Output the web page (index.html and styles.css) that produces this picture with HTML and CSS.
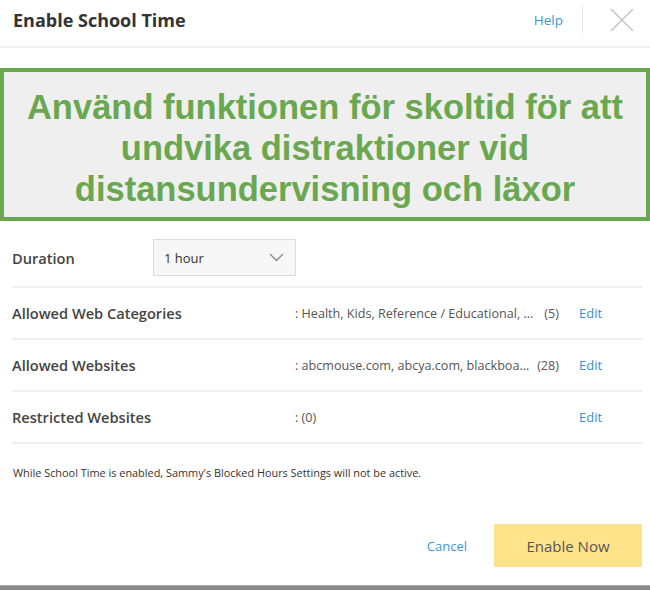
FILE: index.html
```html
<!DOCTYPE html>
<html lang="en">
<head>
    <meta charset="UTF-8">
    <meta name="viewport" content="width=device-width, initial-scale=1.0">
    <title>Enable School Time</title>
    <link rel="stylesheet" href="styles.css">
</head>
<body>
    <div class="dialog">
        <div class="header">
            <h2 class="title">Enable School Time</h2>
            <a class="help" href="#">Help</a>
            <span class="divider"></span>
            <svg class="close" width="24" height="24" viewBox="0 0 24 24">
                <path d="M1 1 L23 23 M23 1 L1 23" stroke="#c8c8c8" stroke-width="1.6" fill="none"/>
            </svg>
        </div>

        <div class="banner">
            Använd funktionen för skoltid för att<br>
            undvika distraktioner vid<br>
            distansundervisning och läxor
        </div>

        <div class="content">
            <div class="row duration">
                <span class="label short">Duration</span>
                <div class="select">
                    <span>1 hour</span>
                    <svg width="15" height="9" viewBox="0 0 15 9">
                        <path d="M1 1 L7.5 7.5 L14 1" stroke="#8a8a8a" stroke-width="1.4" fill="none"/>
                    </svg>
                </div>
            </div>

            <div class="row">
                <span class="label">Allowed Web Categories</span>
                <span class="value">: Health, Kids, Reference / Educational, ...</span>
                <span class="count">(5)</span>
                <a class="edit" href="#">Edit</a>
            </div>

            <div class="row">
                <span class="label">Allowed Websites</span>
                <span class="value">: abcmouse.com, abcya.com, blackboa...</span>
                <span class="count">(28)</span>
                <a class="edit" href="#">Edit</a>
            </div>

            <div class="row">
                <span class="label">Restricted Websites</span>
                <span class="value">: (0)</span>
                <span class="count"></span>
                <a class="edit" href="#">Edit</a>
            </div>

            <p class="note">While School Time is enabled, Sammy's Blocked Hours Settings will not be active.</p>

            <div class="actions">
                <a class="cancel" href="#">Cancel</a>
                <button class="enable">Enable Now</button>
            </div>
        </div>
        <div class="bottom-bar"></div>
    </div>
</body>
</html>
```

FILE: styles.css
```css
body {
    margin: 0;
    font-family: "Open Sans", "Noto Sans", sans-serif;
    background: #fff;
    color: #333;
}

a {
    text-decoration: none;
}

.dialog {
    width: 650px;
    height: 590px;
    display: flex;
    flex-direction: column;
    overflow: hidden;
}

.header {
    height: 48px;
    box-sizing: border-box;
    padding: 0 16px 7px 13px;
    display: flex;
    align-items: center;
    border-bottom: 2px solid #efefef;
}

.title {
    flex: 1;
    margin: 0;
    font-size: 18px;
    font-weight: 700;
    color: #333;
}

.help {
    font-size: 13.5px;
    color: #3a9ad9;
    margin-right: 19px;
}

.divider {
    width: 1px;
    height: 27px;
    background: #e6e6e6;
    margin-right: 27px;
}

.banner {
    margin-top: 20px;
    height: 153px;
    box-sizing: border-box;
    border: 4px solid #6aa84f;
    background: #efefef;
    padding-top: 15px;
    text-align: center;
    font-family: "Liberation Sans", Arial, sans-serif;
    font-weight: 700;
    font-size: 34.5px;
    line-height: 41px;
    color: #6aa84f;
}

.content {
    padding: 0 8px 0 12px;
    flex: 1;
    display: flex;
    flex-direction: column;
}

.row {
    display: flex;
    align-items: center;
    height: 52px;
    box-sizing: border-box;
    border-bottom: 2px solid #efefef;
    font-size: 12.6px;
    color: #555;
}

.row.duration {
    height: auto;
    margin-top: 18px;
    padding-bottom: 10px;
}

.label {
    width: 283px;
    flex-shrink: 0;
    font-size: 14.6px;
    font-weight: 600;
    color: #444;
}

.label.short {
    width: 141px;
}

.select {
    width: 143px;
    height: 37px;
    box-sizing: border-box;
    border: 1px solid #dcdcdc;
    background: #f7f7f7;
    display: flex;
    align-items: center;
    justify-content: space-between;
    padding: 0 11px 0 10px;
    font-size: 13px;
    color: #333;
}

.value {
    flex: 1;
    min-width: 0;
    white-space: nowrap;
}

.count {
    width: 26px;
    flex-shrink: 0;
    text-align: right;
}

.edit {
    margin-left: 20px;
    width: 63px;
    flex-shrink: 0;
    color: #3a8fd9;
    font-size: 13px;
}

.note {
    margin: 21px 0 0 1px;
    font-size: 10.9px;
    color: #333;
}

.actions {
    margin-top: 44px;
    display: flex;
    justify-content: flex-end;
    align-items: center;
}

.cancel {
    color: #3a9ad9;
    font-size: 13px;
    margin-right: 27px;
}

.enable {
    width: 148px;
    height: 43px;
    border: none;
    background: #ffe38a;
    color: #555;
    font-family: "Open Sans", "Noto Sans", sans-serif;
    font-size: 15px;
}

.bottom-bar {
    height: 4px;
    background: #8a8a8a;
    border-top: 1px solid #aaa;
}
```
